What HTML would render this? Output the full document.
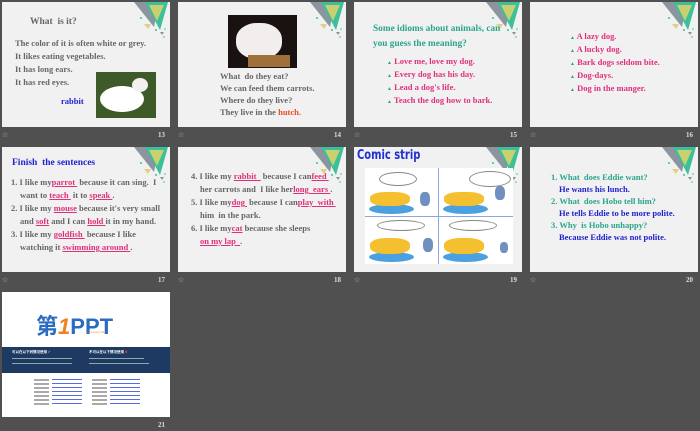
<!DOCTYPE html>
<html><head><meta charset="utf-8"><style>
body{margin:0;width:700px;height:431px;background:#505050;position:relative;overflow:hidden;font-family:"Liberation Serif",serif;}
.s{position:absolute;width:168px;height:125px;background:#f1f1f1;overflow:hidden;}
.n{position:absolute;color:#ddd;font:bold 7px "Liberation Serif",serif;}
.st{position:absolute;color:#bbb;font-size:7px;}
.t{position:absolute;font-weight:bold;font-size:8.5px;white-space:nowrap;}
.g{color:#666;}
.p{color:#e0307a;}
.tl{color:#2aa58a;}
.b{color:#2020d0;}
.u{color:#e0307a;text-decoration:underline;}
.d{position:absolute;right:0;top:0;}
</style></head><body>
<svg width="0" height="0" style="position:absolute"><defs>
<g id="deco">
<polygon points="0,0 25,0 20,25" fill="#8a95a0"/>
<polygon points="11,0 34,0 26,28" fill="#3cbf9a"/>
<polygon points="15,3 30,3 23,19" fill="#c8d070"/>
<polygon points="10,22 17,22 14,27" fill="#e0d080"/>
<polygon points="26,30 30,30 28,33" fill="#8a95a0"/>
<circle cx="7" cy="16" r="1" fill="#3cbf9a"/><circle cx="22" cy="28" r="1" fill="#3cbf9a"/><circle cx="31" cy="27" r="0.8" fill="#3cbf9a"/><circle cx="30" cy="35" r="0.8" fill="#3cbf9a"/>
</g></defs></svg>

<!-- 13 -->
<div class="s" style="left:2px;top:2px">
<svg class="d" width="36" height="38" viewBox="0 0 36 38"><use href="#deco"/></svg>
<div class="t g" style="left:28px;top:15px;font-size:9.5px">What &nbsp;is it?</div>
<div class="t g" style="left:13px;top:36px">The color of it is often white or grey.</div>
<div class="t g" style="left:13px;top:49px">It likes eating vegetables.</div>
<div class="t g" style="left:13px;top:62px">It has long ears.</div>
<div class="t g" style="left:13px;top:75px">It has red eyes.</div>
<div class="t b" style="left:59px;top:94px">rabbit</div>
<div style="position:absolute;left:94px;top:70px;width:60px;height:46px;background:#3d5a28"><div style="position:absolute;left:4px;top:14px;width:44px;height:26px;background:#fff;border-radius:50%"></div><div style="position:absolute;left:36px;top:6px;width:16px;height:14px;background:#f4f0f0;border-radius:50%"></div></div>
</div>
<div class="st" style="left:2px;top:131px">☆</div><div class="n" style="left:158px;top:131px">13</div>

<!-- 14 -->
<div class="s" style="left:178px;top:2px">
<svg class="d" width="36" height="38" viewBox="0 0 36 38"><use href="#deco"/></svg>
<div style="position:absolute;left:50px;top:13px;width:69px;height:53px;background:#1a1210"><div style="position:absolute;left:8px;top:8px;width:46px;height:36px;background:#f2eeee;border-radius:45%"></div><div style="position:absolute;left:20px;top:40px;width:42px;height:12px;background:#a0703a"></div></div>
<div class="t g" style="left:42px;top:69px">What &nbsp;do they eat?</div>
<div class="t g" style="left:42px;top:81px">We can feed them carrots.</div>
<div class="t g" style="left:42px;top:93px">Where do they live?</div>
<div class="t g" style="left:42px;top:105px">They live in the <span style="color:#f04a20">hutch.</span></div>
</div>
<div class="st" style="left:178px;top:131px">☆</div><div class="n" style="left:334px;top:131px">14</div>

<!-- 15 -->
<div class="s" style="left:354px;top:2px">
<svg class="d" width="36" height="38" viewBox="0 0 36 38"><use href="#deco"/></svg>
<div class="t tl" style="left:19px;top:22px;font-size:9.3px">Some idioms about animals, can</div>
<div class="t tl" style="left:19px;top:37px;font-size:9.3px">you guess the meaning?</div>
<div class="t p" style="left:33px;top:54px"><span class="tl" style="font-size:5px">▲</span> Love me, love my dog.</div>
<div class="t p" style="left:33px;top:67px"><span class="tl" style="font-size:5px">▲</span> Every dog has his day.</div>
<div class="t p" style="left:33px;top:80px"><span class="tl" style="font-size:5px">▲</span> Lead a dog's life.</div>
<div class="t p" style="left:33px;top:93px"><span class="tl" style="font-size:5px">▲</span> Teach the dog how to bark.</div>
</div>
<div class="st" style="left:354px;top:131px">☆</div><div class="n" style="left:510px;top:131px">15</div>

<!-- 16 -->
<div class="s" style="left:530px;top:2px">
<svg class="d" width="36" height="38" viewBox="0 0 36 38"><use href="#deco"/></svg>
<div class="t p" style="left:40px;top:29px"><span class="tl" style="font-size:5px">▲</span> A lazy dog.</div>
<div class="t p" style="left:40px;top:42px"><span class="tl" style="font-size:5px">▲</span> A lucky dog.</div>
<div class="t p" style="left:40px;top:55px"><span class="tl" style="font-size:5px">▲</span> Bark dogs seldom bite.</div>
<div class="t p" style="left:40px;top:68px"><span class="tl" style="font-size:5px">▲</span> Dog-days.</div>
<div class="t p" style="left:40px;top:81px"><span class="tl" style="font-size:5px">▲</span> Dog in the manger.</div>
</div>
<div class="st" style="left:530px;top:131px">☆</div><div class="n" style="left:686px;top:131px">16</div>

<!-- 17 -->
<div class="s" style="left:2px;top:147px">
<svg class="d" width="36" height="38" viewBox="0 0 36 38"><use href="#deco"/></svg>
<div class="t b" style="left:10px;top:11px;font-size:9.5px">Finish &nbsp;the sentences</div>
<div class="t g" style="left:9px;top:30px">1. I like my<span class="u">parrot&nbsp;</span> because it can sing. &nbsp;I</div>
<div class="t g" style="left:18px;top:43px">want to <span class="u">teach&nbsp;</span> it to <span class="u">speak </span>.</div>
<div class="t g" style="left:9px;top:56px">2. I like my <span class="u">mouse</span> because it's very small</div>
<div class="t g" style="left:18px;top:69px">and <span class="u">soft</span> and I can <span class="u">hold </span> it in my hand.</div>
<div class="t g" style="left:9px;top:82px">3. I like my <span class="u">goldfish&nbsp;</span> because I like</div>
<div class="t g" style="left:18px;top:95px">watching it <span class="u">swimming around </span>.</div>
</div>
<div class="st" style="left:2px;top:276px">☆</div><div class="n" style="left:158px;top:276px">17</div>

<!-- 18 -->
<div class="s" style="left:178px;top:147px">
<svg class="d" width="36" height="38" viewBox="0 0 36 38"><use href="#deco"/></svg>
<div class="t g" style="left:13px;top:24px">4. I like my <span class="u">rabbit&nbsp;&nbsp;</span> because I can<span class="u">feed&nbsp;</span></div>
<div class="t g" style="left:22px;top:37px">her carrots and &nbsp;I like her<span class="u">long &nbsp;ears </span>.</div>
<div class="t g" style="left:13px;top:50px">5. I like my<span class="u">dog&nbsp;</span> because I can<span class="u">play &nbsp;with&nbsp;</span></div>
<div class="t g" style="left:22px;top:63px">him &nbsp;in the park.</div>
<div class="t g" style="left:13px;top:76px">6. I like my<span class="u">cat</span> because she sleeps</div>
<div class="t g" style="left:22px;top:89px"><span class="u">on my lap &nbsp;</span>.</div>
</div>
<div class="st" style="left:178px;top:276px">☆</div><div class="n" style="left:334px;top:276px">18</div>

<!-- 19 -->
<div class="s" style="left:354px;top:147px">
<svg class="d" width="36" height="38" viewBox="0 0 36 38"><use href="#deco"/></svg>
<div class="t b" style="left:3px;top:1px;font:bold 13px 'DejaVu Sans Condensed','Liberation Sans',sans-serif;color:#2030d0;transform:scaleX(0.85);transform-origin:left">Comic strip</div>
<div style="position:absolute;left:11px;top:21px;width:148px;height:96px;background:#fff">
<div style="position:absolute;left:73px;top:0;width:1px;height:96px;background:#8aa8e0"></div>
<div style="position:absolute;left:0;top:48px;width:148px;height:1px;background:#8aa8e0"></div>
<div style="position:absolute;left:4px;top:36px;width:45px;height:10px;background:#4aa0e0;border-radius:50%"></div>
<div style="position:absolute;left:5px;top:24px;width:40px;height:14px;background:#f4c030;border-radius:40%"></div>
<div style="position:absolute;left:78px;top:36px;width:45px;height:10px;background:#4aa0e0;border-radius:50%"></div>
<div style="position:absolute;left:79px;top:24px;width:40px;height:14px;background:#f4c030;border-radius:40%"></div>
<div style="position:absolute;left:4px;top:84px;width:45px;height:10px;background:#4aa0e0;border-radius:50%"></div>
<div style="position:absolute;left:5px;top:70px;width:40px;height:16px;background:#f4c030;border-radius:40%"></div>
<div style="position:absolute;left:78px;top:84px;width:45px;height:10px;background:#4aa0e0;border-radius:50%"></div>
<div style="position:absolute;left:79px;top:70px;width:40px;height:16px;background:#f4c030;border-radius:40%"></div>
<div style="position:absolute;left:55px;top:24px;width:10px;height:14px;background:#7090c0;border-radius:40%"></div>
<div style="position:absolute;left:130px;top:18px;width:10px;height:14px;background:#7090c0;border-radius:40%"></div>
<div style="position:absolute;left:58px;top:70px;width:10px;height:14px;background:#7090c0;border-radius:40%"></div>
<div style="position:absolute;left:135px;top:74px;width:8px;height:11px;background:#7090c0;border-radius:40%"></div>
<div style="position:absolute;left:14px;top:4px;width:36px;height:12px;border:1px solid #888;border-radius:50%"></div>
<div style="position:absolute;left:104px;top:3px;width:40px;height:14px;border:1px solid #888;border-radius:50%"></div>
<div style="position:absolute;left:12px;top:52px;width:46px;height:9px;border:1px solid #888;border-radius:50%"></div>
<div style="position:absolute;left:84px;top:52px;width:46px;height:9px;border:1px solid #888;border-radius:50%"></div>
</div>
</div>
<div class="st" style="left:354px;top:276px">☆</div><div class="n" style="left:510px;top:276px">19</div>

<!-- 20 -->
<div class="s" style="left:530px;top:147px">
<svg class="d" width="36" height="38" viewBox="0 0 36 38"><use href="#deco"/></svg>
<div class="t tl" style="left:21px;top:25px">1. What &nbsp;does Eddie want?</div>
<div class="t b" style="left:29px;top:37px">He wants his lunch.</div>
<div class="t tl" style="left:21px;top:49px">2. What &nbsp;does Hobo tell him?</div>
<div class="t b" style="left:29px;top:61px">He tells Eddie to be more polite.</div>
<div class="t tl" style="left:21px;top:73px">3. Why &nbsp;is Hobo unhappy?</div>
<div class="t b" style="left:29px;top:85px">Because Eddie was not polite.</div>
</div>
<div class="st" style="left:530px;top:276px">☆</div><div class="n" style="left:686px;top:276px">20</div>

<!-- 21 -->
<div class="s" style="left:2px;top:292px;background:#fff">
<div style="position:absolute;left:34px;top:17px;font:bold 22px 'Liberation Sans','Noto Sans CJK SC',sans-serif;color:#2a6cc0;white-space:nowrap">第<span style="color:#f08020;font-style:italic">1</span>PPT</div>
<div style="position:absolute;left:84px;top:38px;font-size:3px;color:#f08020">www.1ppt.com</div>
<div style="position:absolute;left:0;top:55px;width:168px;height:26px;background:#1e3a62"></div>
<div style="position:absolute;left:10px;top:58px;font:bold 3.5px 'Noto Sans CJK SC',sans-serif;color:#fff">可以在以下列情况使用 <span style="color:#5c5">✔</span></div>
<div style="position:absolute;left:87px;top:58px;font:bold 3.5px 'Noto Sans CJK SC',sans-serif;color:#fff">不可以在以下情况使用 <span style="color:#e33">✖</span></div>
<div style="position:absolute;left:10px;top:66px;width:60px;height:1px;background:#8aa"></div>
<div style="position:absolute;left:10px;top:71px;width:60px;height:1px;background:#8aa"></div>
<div style="position:absolute;left:87px;top:66px;width:55px;height:1px;background:#8aa"></div>
<div style="position:absolute;left:87px;top:71px;width:60px;height:1px;background:#8aa"></div>
<div style="position:absolute;left:32px;top:87px;width:15px;height:26px;background:repeating-linear-gradient(#aaa 0 2px,#fff 2px 4px)"></div>
<div style="position:absolute;left:50px;top:87px;width:30px;height:26px;background:repeating-linear-gradient(#5a6de0 0 1px,#fff 1px 4px)"></div>
<div style="position:absolute;left:90px;top:87px;width:15px;height:26px;background:repeating-linear-gradient(#aaa 0 2px,#fff 2px 4px)"></div>
<div style="position:absolute;left:108px;top:87px;width:30px;height:26px;background:repeating-linear-gradient(#5a6de0 0 1px,#fff 1px 4px)"></div>
</div>
<div class="n" style="left:158px;top:421px">21</div>
</body></html>
